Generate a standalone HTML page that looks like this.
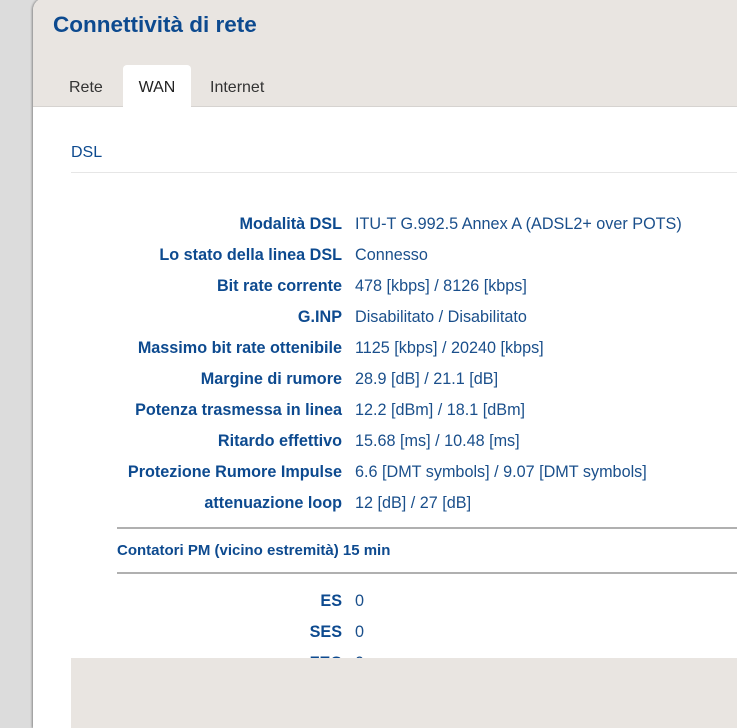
<!DOCTYPE html>
<html><head><meta charset="utf-8"><style>
html,body{margin:0;padding:0;width:737px;height:715px;overflow:hidden;background:#dcdcdc;font-family:"Liberation Sans",Arial,sans-serif;}
.panel{position:absolute;left:33px;top:-2px;width:740px;height:730px;background:#fff;border-top-left-radius:12px;box-shadow:-1px 0 2px #888;overflow:hidden;}
.head{position:absolute;left:0;top:0;right:0;height:108px;background:#e9e5e1;border-bottom:1px solid #d6d3d0;}
h1{position:absolute;left:20px;top:14px;margin:0;font-size:22.5px;font-weight:bold;color:#0d4a8f;}
.tab{position:absolute;top:67px;height:43px;line-height:45px;font-size:16px;color:#333;}
.tab.on{background:#fff;border-radius:4px 4px 0 0;left:90px;width:68px;text-align:center;color:#222;}
.dsl{position:absolute;left:38px;top:146px;font-size:16px;color:#0d4a8f;}
.hr1{position:absolute;left:38px;top:174px;right:0;height:1px;background:#e6e6e6;}
.row{position:absolute;left:0;width:700px;height:20px;font-size:16.2px;}
.row .l{position:absolute;right:391px;font-weight:bold;color:#0d4a8f;white-space:nowrap;}
.row .v{position:absolute;left:322px;color:#1a4f8b;white-space:nowrap;}
.line{position:absolute;left:84px;right:0;height:2px;background:#b0b0b0;}
.pm{position:absolute;left:84px;top:544px;font-size:15px;font-weight:bold;color:#0d4a8f;}
.foot{position:absolute;left:38px;top:660px;right:0;height:80px;background:#e9e5e1;}
</style></head><body>
<div class="panel">
<div class="head"><h1>Connettività di rete</h1>
<div class="tab" style="left:36px">Rete</div>
<div class="tab on">WAN</div>
<div class="tab" style="left:177px">Internet</div>
</div>
<div class="dsl">DSL</div>
<div class="hr1"></div>
<div class="row" style="top:217px"><span class="l">Modalità DSL</span><span class="v">ITU-T G.992.5 Annex A (ADSL2+ over POTS)</span></div>
<div class="row" style="top:248px"><span class="l">Lo stato della linea DSL</span><span class="v">Connesso</span></div>
<div class="row" style="top:279px"><span class="l">Bit rate corrente</span><span class="v">478 [kbps] / 8126 [kbps]</span></div>
<div class="row" style="top:310px"><span class="l">G.INP</span><span class="v">Disabilitato / Disabilitato</span></div>
<div class="row" style="top:341px"><span class="l">Massimo bit rate ottenibile</span><span class="v">1125 [kbps] / 20240 [kbps]</span></div>
<div class="row" style="top:372px"><span class="l">Margine di rumore</span><span class="v">28.9 [dB] / 21.1 [dB]</span></div>
<div class="row" style="top:403px"><span class="l">Potenza trasmessa in linea</span><span class="v">12.2 [dBm] / 18.1 [dBm]</span></div>
<div class="row" style="top:434px"><span class="l">Ritardo effettivo</span><span class="v">15.68 [ms] / 10.48 [ms]</span></div>
<div class="row" style="top:465px"><span class="l">Protezione Rumore Impulse</span><span class="v">6.6 [DMT symbols] / 9.07 [DMT symbols]</span></div>
<div class="row" style="top:496px"><span class="l">attenuazione loop</span><span class="v">12 [dB] / 27 [dB]</span></div>
<div class="line" style="top:529px"></div>
<div class="pm">Contatori PM (vicino estremità) 15 min</div>
<div class="line" style="top:574px"></div>
<div class="row" style="top:594px"><span class="l">ES</span><span class="v">0</span></div>
<div class="row" style="top:625px"><span class="l">SES</span><span class="v">0</span></div>
<div class="row" style="top:656px"><span class="l">FEC</span><span class="v">0</span></div>
<div class="foot"></div>
</div>
</body></html>
